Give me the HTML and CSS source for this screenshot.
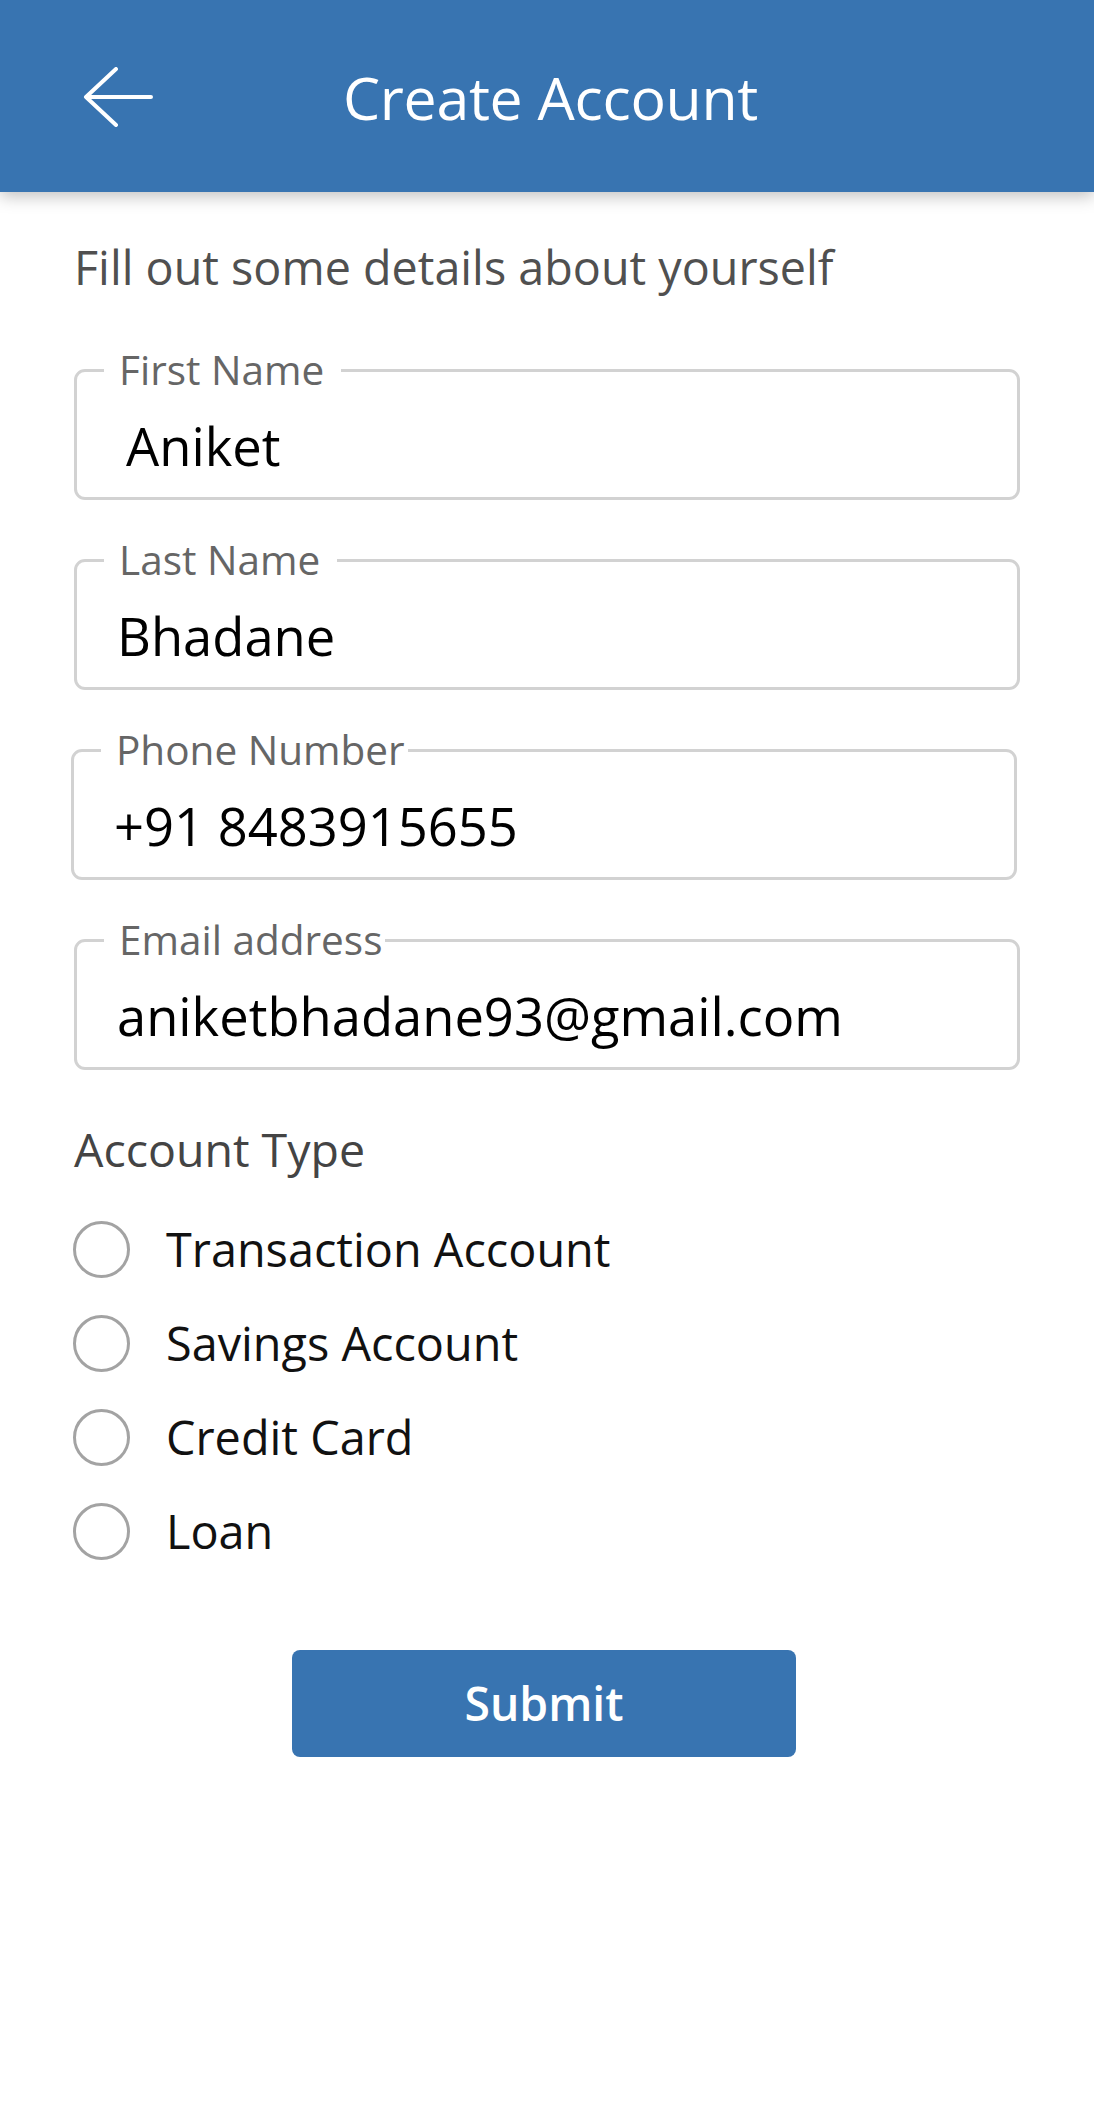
FILE: index.html
```html
<!DOCTYPE html>
<html lang="en">
<head>
<meta charset="utf-8">
<title>Create Account</title>
<link rel="stylesheet" href="styles.css">
</head>
<body>
<header class="appbar">
  <button class="back" aria-label="Back">
    <svg width="70" height="60" viewBox="0 0 70 60" fill="none" stroke="#fff" stroke-width="4" stroke-linecap="round" stroke-linejoin="round">
      <path d="M68 30 H3 M33 2 L3 30 L33 58"/>
    </svg>
  </button>
  <h1 class="title">Create Account</h1>
  <span class="spacer"></span>
</header>

<main class="content">
  <p class="intro">Fill out some details about yourself</p>

  <fieldset class="field field--first">
    <legend class="field-label field-label--wide">First Name</legend>
    <div class="field-value">Aniket</div>
  </fieldset>

  <fieldset class="field">
    <legend class="field-label field-label--wide">Last Name</legend>
    <div class="field-value">Bhadane</div>
  </fieldset>

  <fieldset class="field field--shift">
    <legend class="field-label">Phone Number</legend>
    <div class="field-value">+91 8483915655</div>
  </fieldset>

  <fieldset class="field">
    <legend class="field-label">Email address</legend>
    <div class="field-value">aniketbhadane93@gmail.com</div>
  </fieldset>

  <p class="section-label">Account Type</p>

  <ul class="radios">
    <li class="radio"><span class="radio-dot"></span><span class="radio-text">Transaction Account</span></li>
    <li class="radio"><span class="radio-dot"></span><span class="radio-text">Savings Account</span></li>
    <li class="radio"><span class="radio-dot"></span><span class="radio-text">Credit Card</span></li>
    <li class="radio"><span class="radio-dot"></span><span class="radio-text">Loan</span></li>
  </ul>

  <div class="actions">
    <button class="submit">Submit</button>
  </div>
</main>
</body>
</html>
```

FILE: styles.css
```css
* { box-sizing: border-box; }

html, body {
  margin: 0;
  padding: 0;
  background: #ffffff;
}

body {
  font-family: "Open Sans", "Noto Sans", sans-serif;
  color: #111;
  width: 1094px;
  min-height: 2102px;
}

.appbar {
  height: 192px;
  background: #3874b1;
  display: grid;
  grid-template-columns: 1fr auto 1fr;
  align-items: center;
  box-shadow: 0 4px 16px rgba(0, 0, 0, 0.26);
  position: relative;
  z-index: 1;
}

.back {
  justify-self: start;
  margin-left: 83px;
  margin-top: 2px;
  padding: 0;
  border: 0;
  background: transparent;
  display: flex;
}

.title {
  margin: 2px 0 0 7px;
  font-size: 59px;
  font-weight: 400;
  color: #ffffff;
  line-height: 1;
  letter-spacing: -0.3px;
}

.content {
  padding: 0 74px;
}

.intro {
  margin: 44px 0 50px;
  font-size: 46.7px;
  line-height: 62px;
  color: #505050;
}

.field {
  margin: 0 0 38px;
  padding: 24px 30px 21px 27px;
  border: 3px solid #d2d2d2;
  border-radius: 11px;
  min-inline-size: 0;
}

.field--shift {
  margin-left: -3px;
  margin-right: 3px;
}

.field-label {
  font-size: 40.5px;
  line-height: 44px;
  color: #666666;
  padding: 0 3px 0 15px;
}

.field-label--wide {
  padding-right: 17px;
}

.field-value {
  font-size: 52.5px;
  line-height: 60px;
  color: #000;
  padding-left: 13px;
}

.field--first .field-value {
  padding-left: 22px;
}

.section-label {
  margin: 48px 0 22px;
  font-size: 46.5px;
  line-height: 62px;
  color: #444444;
}

.radios {
  list-style: none;
  margin: 0;
  padding: 0;
}

.radio {
  height: 94px;
  display: flex;
  align-items: center;
  gap: 36px;
  margin-left: -1px;
}

.radio-dot {
  width: 57px;
  height: 57px;
  border: 3px solid #a3a3a3;
  border-radius: 50%;
  flex: none;
}

.radio-text {
  font-size: 46.8px;
  color: #111;
}

.actions {
  display: flex;
  justify-content: center;
  margin-top: 72px;
  padding-right: 6px;
}

.submit {
  width: 504px;
  height: 107px;
  border: 0;
  border-radius: 8px;
  background: #3874b1;
  color: #ffffff;
  font-family: "Open Sans", "Noto Sans", sans-serif;
  font-size: 46.3px;
  font-weight: 600;
  padding: 0;
}
```
